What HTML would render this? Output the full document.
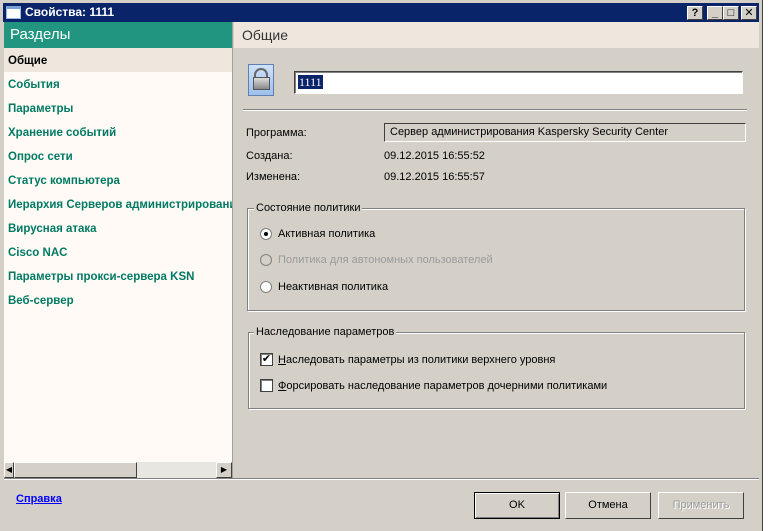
<!DOCTYPE html>
<html><head><meta charset="utf-8"><style>
*{margin:0;padding:0;box-sizing:border-box}
body{width:771px;height:531px;background:#fff;font-family:"Liberation Sans","DejaVu Sans",sans-serif;font-size:11px;position:relative;overflow:hidden}
.a{position:absolute}
.win{left:0;top:0;width:763px;height:531px;background:#d4d0c8;border-right:1px solid #404040}
.title{left:3px;top:3px;width:756px;height:19px;background:#0a246a;color:#fff;font-weight:bold;font-size:12px;line-height:19px;padding-left:22px}
.tb{top:6px;width:16px;height:14px;background:#d4d0c8;border:1px solid;border-color:#fff #404040 #404040 #fff;color:#000;font-weight:bold;font-size:11px;line-height:12px;text-align:center}
.left{left:4px;top:22px;width:229px;height:456px;background:#fffaf5;border-right:1px solid #a0a0a0}
.lh{left:4px;top:22px;width:228px;height:26px;background:#21957f;color:#fff;font-size:15px;line-height:26px;padding-left:6px}
.it{left:8px;font-weight:bold;color:#007a63;font-size:11.5px}
.rh{left:234px;top:22px;width:525px;height:26px;background:#efe7de;color:#333;font-size:14px;line-height:26px;padding-left:8px}
.lbl{left:246px;color:#000}
.grp{border:1px solid #808080;box-shadow:1px 1px 0 #fff inset,1px 1px 0 #fff}
.gt{background:#d4d0c8;padding:0 2px}
.rad{width:12px;height:12px;border-radius:50%;background:#fff;border:1px solid #808080}
.chk{width:13px;height:13px;background:#fff;border:1px solid #404040;box-shadow:inset 1px 1px 0 #808080}
.btn{top:492px;height:27px;width:86px;border:1px solid;border-color:#fff #404040 #404040 #fff;text-align:center;line-height:25px;background:#d4d0c8}
</style></head><body>
<div class="a win"></div>
<div class="a title">Свойства: 1111</div>
<div class="a" style="left:6px;top:6px;width:15px;height:13px;background:#fff;border:1px solid #a0b8e0;border-top:3px solid #7aa0d8"></div>
<div class="a tb" style="left:687px">?</div>
<div class="a tb" style="left:707px">_</div>
<div class="a tb" style="left:723px">□</div>
<div class="a tb" style="left:741px">✕</div>

<div class="a left"></div>
<div class="a lh">Разделы</div>
<div class="a" style="left:4px;top:48px;width:228px;height:24px;background:#efe7de"></div>
<div class="a it" style="top:55px;color:#000">Общие</div>
<div class="a it" style="top:79px">События</div>
<div class="a it" style="top:103px">Параметры</div>
<div class="a it" style="top:127px">Хранение событий</div>
<div class="a it" style="top:151px">Опрос сети</div>
<div class="a it" style="top:175px">Статус компьютера</div>
<div class="a it" style="top:199px;width:224px;white-space:nowrap;overflow:hidden">Иерархия Серверов администрирования</div>
<div class="a it" style="top:223px">Вирусная атака</div>
<div class="a it" style="top:247px">Cisco NAC</div>
<div class="a it" style="top:271px">Параметры прокси-сервера KSN</div>
<div class="a it" style="top:295px">Веб-сервер</div>
<div class="a" style="left:4px;top:462px;width:228px;height:16px;background:#e8e6e0"></div>
<div class="a" style="left:4px;top:462px;width:10px;height:16px;background:#d4d0c8;border:1px solid;border-color:#fff #404040 #404040 #fff;font-size:8px;line-height:13px;text-align:center">◀</div>
<div class="a" style="left:14px;top:462px;width:123px;height:16px;background:#d4d0c8;border:1px solid;border-color:#fff #404040 #404040 #fff"></div>
<div class="a" style="left:216px;top:462px;width:16px;height:16px;background:#d4d0c8;border:1px solid;border-color:#fff #404040 #404040 #fff;font-size:8px;line-height:13px;text-align:center">▶</div>

<div class="a rh">Общие</div>
<div class="a" style="left:248px;top:64px;width:26px;height:32px;background:linear-gradient(#cfe2f8,#9cc0ec);border:1px solid #6080b0"></div>
<div class="a" style="left:254px;top:68px;width:14px;height:10px;border:2px solid #666;border-bottom:none;border-radius:7px 7px 0 0"></div>
<div class="a" style="left:253px;top:77px;width:17px;height:13px;background:linear-gradient(#ddd,#888);border:1px solid #555"></div>
<div class="a" style="left:294px;top:71px;width:449px;height:23px;background:#fff;border:1px solid;border-color:#404040 #fff #fff #404040;box-shadow:inset 1px 1px 0 #808080"></div>
<div class="a" style="left:298px;top:75px;background:#0a246a;color:#fff;font-family:'Liberation Serif',serif;font-size:12px;line-height:14px;padding:0 1px">1111</div>
<div class="a" style="left:243px;top:109px;width:504px;height:2px;border-top:1px solid #808080;border-bottom:1px solid #fff"></div>
<div class="a lbl" style="top:127px">Программа:</div>
<div class="a" style="left:384px;top:123px;width:362px;height:19px;background:#d4d0c8;border:1px solid;border-color:#404040 #fff #fff #404040;padding-left:5px;line-height:16px">Сервер администрирования Kaspersky Security Center</div>
<div class="a lbl" style="top:150px">Создана:</div>
<div class="a" style="left:384px;top:150px">09.12.2015 16:55:52</div>
<div class="a lbl" style="top:171px">Изменена:</div>
<div class="a" style="left:384px;top:171px">09.12.2015 16:55:57</div>

<div class="a grp" style="left:247px;top:208px;width:498px;height:103px"></div>
<div class="a gt" style="left:254px;top:202px">Состояние политики</div>
<div class="a rad" style="left:260px;top:228px"></div><div class="a" style="left:264px;top:232px;width:4px;height:4px;background:#000;border-radius:50%"></div>
<div class="a" style="left:278px;top:228px">Активная политика</div>
<div class="a rad" style="left:260px;top:254px;background:#d4d0c8"></div>
<div class="a" style="left:278px;top:254px;color:#9a9a9a">Политика для автономных пользователей</div>
<div class="a rad" style="left:260px;top:281px"></div>
<div class="a" style="left:278px;top:281px">Неактивная политика</div>

<div class="a grp" style="left:248px;top:332px;width:497px;height:77px"></div>
<div class="a gt" style="left:254px;top:326px">Наследование параметров</div>
<div class="a chk" style="left:260px;top:353px;font-size:11px;line-height:10px;text-align:center;font-weight:bold">✔</div>
<div class="a" style="left:278px;top:354px"><u>Н</u>аследовать параметры из политики верхнего уровня</div>
<div class="a chk" style="left:260px;top:379px"></div>
<div class="a" style="left:278px;top:380px"><u>Ф</u>орсировать наследование параметров дочерними политиками</div>

<div class="a" style="left:4px;top:478px;width:755px;height:2px;border-top:1px solid #808080;border-bottom:1px solid #fff"></div>
<div class="a" style="left:16px;top:493px;color:#0000ff;font-weight:bold;text-decoration:underline">Справка</div>
<div class="a btn" style="left:474px;border:1px solid #000;box-shadow:inset 1px 1px 0 #fff,inset -1px -1px 0 #808080">OK</div>
<div class="a btn" style="left:565px">Отмена</div>
<div class="a btn" style="left:658px;color:#9a9a9a;text-shadow:1px 1px 0 #fff">Применить</div>
</body></html>
